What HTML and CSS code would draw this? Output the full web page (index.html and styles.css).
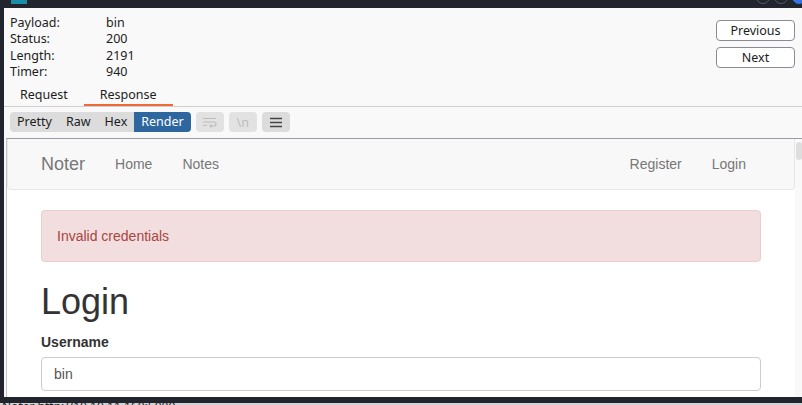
FILE: index.html
```html
<!DOCTYPE html>
<html lang="en">
<head>
  <meta charset="UTF-8" />
  <title>Intruder result</title>
  <link rel="stylesheet" href="styles.css">
</head>
<body>

  <!-- window title bar -->
  <div class="titlebar">
    <span class="app-icon"></span>
    <span class="dot dot-a"></span>
    <span class="dot dot-b"></span>
    <span class="dot dot-c"></span>
  </div>

  <div class="panel">
    <div class="head">
      <div class="info">
        <span>Payload:</span><span>bin</span>
        <span>Status:</span><span>200</span>
        <span>Length:</span><span>2191</span>
        <span>Timer:</span><span>940</span>
      </div>
      <div class="nav-buttons">
        <button class="btn">Previous</button>
        <button class="btn">Next</button>
      </div>
    </div>

    <div class="tabs">
      <div class="tab">Request</div>
      <div class="tab active">Response</div>
    </div>

    <div class="toolbar">
      <div class="seg">
        <span>Pretty</span>
        <span>Raw</span>
        <span>Hex</span>
        <span class="on">Render</span>
      </div>
      <span class="tool off">
        <svg width="16" height="12" viewBox="0 0 16 12"><path d="M1 2.5h13M1 6h11a2 2 0 0 1 0 4H8M1 9.5h4M9.5 8.3 8 10l1.5 1.5" fill="none" stroke="#bcbcbc" stroke-width="1.1"/></svg>
      </span>
      <span class="tool off text-tool">\n</span>
      <span class="tool">
        <svg width="14" height="11" viewBox="0 0 14 11"><path d="M1 1.5h12M1 5.5h12M1 9.5h12" stroke="#444" stroke-width="1.3"/></svg>
      </span>
    </div>

    <!-- rendered response -->
    <div class="frame">
      <div class="viewport">
        <nav class="navbar">
          <span class="brand">Noter</span>
          <a>Home</a>
          <a>Notes</a>
          <span class="spacer"></span>
          <a>Register</a>
          <a>Login</a>
        </nav>
        <div class="container">
          <div class="alert">Invalid credentials</div>
          <h1>Login</h1>
          <label>Username</label>
          <div class="input">bin</div>
        </div>
      </div>
      <div class="scrollbar"><span class="thumb"></span></div>
    </div>
  </div>

  <div class="statusbar">Noter http://10.10.11.160:5000</div>

</body>
</html>
```

FILE: styles.css
```css
body {
  margin: 0;
  width: 802px;
  height: 405px;
  overflow: hidden;
  background: #22252d;
  font-family: "Noto Sans", sans-serif;
  font-size: 12.5px;
  color: #1c1c1c;
}

/* title bar */
.titlebar {
  position: relative;
  height: 8px;
}
.app-icon {
  position: absolute;
  left: 11px;
  top: 0;
  width: 16px;
  height: 4px;
  background: #1c8da6;
}
.dot {
  position: absolute;
  top: -10px;
  width: 12px;
  height: 12px;
  border-radius: 50%;
  border: 1px solid #555a63;
}
.dot-a { left: 756px; }
.dot-b { left: 774px; }
.dot-c {
  left: 792px;
  background: #3574e6;
  border-color: #3574e6;
}

.panel {
  margin-left: 4px;
  height: 389px;
  background: #f9f9f9;
  overflow: hidden;
}

.head {
  display: flex;
  justify-content: space-between;
  padding: 7px 7px 0 6px;
}
.info {
  display: grid;
  grid-template-columns: 96px auto;
  line-height: 16.3px;
}
.nav-buttons {
  display: flex;
  flex-direction: column;
  gap: 6px;
  padding-top: 5px;
}
.btn {
  width: 79px;
  height: 21px;
  padding: 0;
  font-family: "Noto Sans", sans-serif;
  font-size: 12.5px;
  color: #1c1c1c;
  background: #fff;
  border: 1px solid #8d8a98;
  border-radius: 4px;
}

.tabs {
  display: flex;
  margin-top: 6px;
  border-bottom: 1px solid #cfcfcf;
}
.tab {
  padding: 1px 16px 2px;
  line-height: 15px;
  border-bottom: 2px solid transparent;
}
.tab.active {
  border-bottom-color: #f06a35;
}

.toolbar {
  display: flex;
  gap: 5px;
  padding: 5px 0 0 6px;
  height: 20px;
}
.seg {
  display: flex;
  background: #dcdcdc;
  border-radius: 4px;
  overflow: hidden;
}
.seg span {
  padding: 0 7px;
  line-height: 20px;
}
.seg .on {
  background: #2e679f;
  color: #fff;
}
.tool {
  display: flex;
  align-items: center;
  justify-content: center;
  width: 28px;
  height: 20px;
  background: #dcdcdc;
  border-radius: 4px;
}
.tool.off {
  background: #e2e2e2;
}
.text-tool {
  color: #bdbdbd;
}

.frame {
  display: flex;
  margin: 6px 0 0 2px;
  height: 260px;
  border-top: 1px solid #9b9ba6;
  border-left: 1px solid #c4c4c8;
}
.viewport {
  width: 789px;
  background: #fff;
  font-family: "Liberation Sans", Arial, sans-serif;
  font-size: 14px;
  color: #333;
}
.scrollbar {
  flex: 1;
  background: #f9f9f9;
  padding-top: 3px;
}
.thumb {
  display: block;
  width: 6px;
  height: 18px;
  margin-left: 1px;
  background: #dedede;
  border-radius: 3px;
}

.navbar {
  display: flex;
  align-items: center;
  height: 50px;
  padding: 0 33px 0 18px;
  background: #f8f8f8;
  border: 1px solid #e7e7e7;
  border-top: 0;
  border-radius: 0 0 4px 4px;
  margin-bottom: 20px;
}
.brand {
  font-size: 18px;
  color: #777;
  padding: 0 15px;
}
.navbar a {
  color: #777;
  padding: 0 15px;
}
.spacer {
  flex: 1;
}

.container {
  width: 720px;
  margin: 0 auto;
}
.alert {
  padding: 15px;
  line-height: 20px;
  margin-bottom: 20px;
  background: #f2dede;
  border: 1px solid #ebccd1;
  border-radius: 4px;
  color: #a94442;
}
h1 {
  margin: 20px 0 10px;
  font-size: 36px;
  font-weight: 500;
  line-height: 1.1;
}
label {
  display: block;
  font-weight: bold;
  line-height: 20px;
  margin-bottom: 5px;
}
.input {
  height: 32px;
  padding: 0 12px;
  line-height: 32px;
  border: 1px solid #ccc;
  border-radius: 4px;
  color: #555;
}

.statusbar {
  margin-top: 6px;
  height: 12px;
  background: #d4d4d4;
  padding-left: 2px;
  font-size: 12px;
  line-height: 8px;
  color: #222;
}
```
